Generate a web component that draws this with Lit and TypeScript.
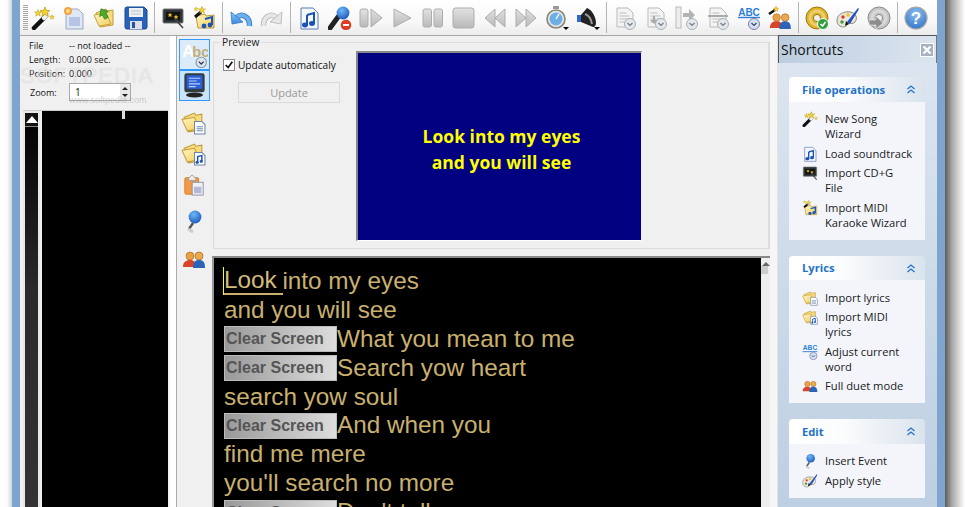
import { LitElement, html, css, svg } from "lit";
import { customElement } from "lit/decorators.js";

const clock = (x = 17, y = 18) => svg`<circle cx=${x} cy=${y} r="5.5" fill="#e4e8ea" stroke="#a9b0b4"/><path d="M${x - 2.5} ${y - 1}l2.5 2.5 2.5-2.5" fill="none" stroke="#778" stroke-width="1.2"/>`;
const greyDoc = svg`<path d="M4 2h11l5 5v14H4z" fill="#f4f4f4" stroke="#b9b9b9"/><path d="M6.5 7h7M6.5 10h10M6.5 13h10M6.5 16h6" stroke="#bdbdbd"/>`;
const folder = svg`<path d="M3 7l10-4 1 2 6-1v15l-13 2z" fill="#f6dc7c" stroke="#c09a3a"/><path d="M1 9l12-2 5 11-12 2z" fill="url(#fold)" stroke="#c9a23f"/>`;
const wandPath = svg`<path d="M3 22L15 10" stroke="#111" stroke-width="4.5" stroke-linecap="round"/><path d="M13 12L17 8" stroke="#eee" stroke-width="4.5" stroke-linecap="round"/>`;
const star = (x: number, y: number, r: number) => svg`<path transform="translate(${x} ${y}) scale(${r})" d="M0-1L.3-.3 1-.3.45.15.65.9 0 .45-.65.9-.45.15-1-.3-.3-.3z" fill="#f5d327" stroke="#a88a10" stroke-width=".12"/>`;
const duet = svg`<circle cx="8" cy="9" r="4" fill="#e8a044" stroke="#a8641c" stroke-width=".6"/><path d="M1 20c0-5 3-7 7-7s6 2 6 7z" fill="#d8442a"/><circle cx="17" cy="9" r="4" fill="#eda94e" stroke="#94581a" stroke-width=".6"/><path d="M11 21c0-6 2-8 6-8s6 2 6 8z" fill="#2a63b8"/>`;
const disc = (c: string, d: string) => svg`<circle cx="12" cy="12" r="11" fill=${c} stroke=${d}/><circle cx="12" cy="12" r="7" fill="none" stroke="#fff" stroke-opacity=".35" stroke-width="3"/><circle cx="12" cy="12" r="3.6" fill="#eee" stroke=${d}/>`;
const monitor = svg`<rect x="2" y="3" width="20" height="14" rx="1" fill="#2d3438" stroke="#777"/>`;

const icons: Record<string, unknown> = {
  wand: svg`${wandPath}${star(14, 6, 5)}${star(7, 7, 3.5)}${star(21, 11, 2.5)}`,
  newdoc: svg`<path d="M4 3h12l5 5v15H4z" fill="#dfe7f4" stroke="#9aa8c4"/><rect x="7" y="11" width="11" height="9" fill="#b6c5e6"/><circle cx="6" cy="5" r="4" fill="#f5a14a"/><circle cx="6" cy="5" r="2" fill="#fbe27a"/>`,
  open: svg`${folder}<path d="M9 13V8H6l5-6 5 6h-3v5z" transform="rotate(-30 11 8)" fill="#4cab2c" stroke="#2b7a18" stroke-width=".6"/>`,
  save: svg`<path d="M1 3a2 2 0 012-2h17l3 3v17a2 2 0 01-2 2H3a2 2 0 01-2-2z" fill="#2762b8" stroke="#174a94"/><rect x="5" y="2" width="14" height="9" fill="#eef1f6"/><path d="M7 5h10M7 8h10" stroke="#bbc"/><rect x="6" y="15" width="12" height="8" fill="#dde"/><rect x="8" y="16" width="3" height="6" fill="#27509a"/>`,
  cdg: svg`${monitor}<path d="M5 6h14v8H5z" fill="#111"/>${star(9, 9, 2.3)}${star(15, 11, 2.3)}<path d="M14 13l8 9" stroke="#444" stroke-width="1.6"/>`,
  midi: svg`<path d="M4 10l9-2 1 2 8-1v13H6z" fill="url(#fold)" stroke="#c09a3a"/><path d="M13 13l7-2v8" fill="none" stroke="#1c55b8" stroke-width="2"/><circle cx="12" cy="20" r="2.4" fill="#1c55b8"/><circle cx="18" cy="19" r="2.4" fill="#1c55b8"/><path d="M3 11L9 6" stroke="#111" stroke-width="3"/>${star(10, 4, 3.6)}${star(4, 3, 2.2)}`,
  undo: svg`<path d="M20.500 20C21 11 13 6 7 12" fill="none" stroke="#2c76c8" stroke-width="5.400"/><path d="M20.500 20C21 11 13 6 7 12" fill="none" stroke="#6db0f0" stroke-width="3.800"/><path d="M2 6l1 12 11-2z" fill="url(#blue)" stroke="#2c76c8" stroke-width=".8" stroke-linejoin="round"/>`,
  redo: svg`<path d="M3.500 20C3 11 11 6 17 12" fill="none" stroke="#b4b4b4" stroke-width="5.400"/><path d="M3.500 20C3 11 11 6 17 12" fill="none" stroke="#e6e6e6" stroke-width="3.800"/><path d="M22 6l-1 12-11-2z" fill="#e6e6e6" stroke="#b4b4b4" stroke-width=".8" stroke-linejoin="round"/>`,
  note: svg`<path d="M4 2h12l5 5v16H4z" fill="#f5f7fb" stroke="#5b7db8"/><path d="M10 9l7-2v10" fill="none" stroke="#1b53b5" stroke-width="2"/><path d="M10 9v10" stroke="#1b53b5" stroke-width="2"/><ellipse cx="8" cy="19" rx="3" ry="2.4" fill="#1b53b5"/><ellipse cx="15" cy="17.5" rx="3" ry="2.4" fill="#1b53b5"/>`,
  mic: svg`<path d="M2 22L10 11" stroke="#222" stroke-width="5" stroke-linecap="round"/><circle cx="15" cy="7" r="6.4" fill="url(#blue2)"/><circle cx="18" cy="19" r="5" fill="#e33b22" stroke="#a5200f" stroke-width=".5"/><rect x="15" y="18" width="6" height="2" fill="#fff"/>`,
  step: svg`<g fill="url(#gm)" stroke="#adadad"><rect x="1" y="3" width="8" height="18" rx="2"/><path d="M12 3l11 9-11 9z" stroke-linejoin="round"/></g>`,
  play: svg`<path d="M4 3l17 9-17 9z" fill="url(#gm)" stroke="#adadad" stroke-linejoin="round"/>`,
  pause: svg`<g fill="url(#gm)" stroke="#adadad"><rect x="2" y="3" width="8.5" height="18" rx="2"/><rect x="13" y="3" width="8.5" height="18" rx="2"/></g>`,
  stop: svg`<rect x="1" y="2" width="21" height="20" rx="2.5" fill="url(#gm)" stroke="#adadad"/>`,
  rew: svg`<g fill="url(#gm)" stroke="#adadad" stroke-linejoin="round"><path d="M12 3L2 12l10 9z"/><path d="M22 3L12 12l10 9z"/></g>`,
  ff: svg`<g fill="url(#gm)" stroke="#adadad" stroke-linejoin="round"><path d="M2 3l10 9-10 9z"/><path d="M12 3l10 9-10 9z"/></g>`,
  timer: svg`<rect x="8" y="0" width="6" height="3" fill="#999"/><circle cx="11" cy="13" r="9" fill="#dfe6ea" stroke="#8d8674" stroke-width="1.6"/><circle cx="11" cy="13" r="6.5" fill="#6eaee2"/><path d="M11 13l3-5" stroke="#fff" stroke-width="1.4"/><path d="M18 21h6l-3 3z" fill="#000"/>`,
  speaker: svg`<path d="M1 9h4v7H1z" fill="#2f68c8"/><path d="M5 9l6-7c5 2 9 9 9 15 0 2-1 4-3 4l-12-5z" fill="#222"/><path d="M9 8c3 1 6 5 7 10" stroke="#999" stroke-width="2" fill="none"/><path d="M18 21h6l-3 3z" fill="#000"/>`,
  doc1: svg`${greyDoc}${clock()}`,
  doc2: svg`${greyDoc}<path d="M9 10v4H6l4 4 4-4h-3v-4z" fill="#aaa"/>${clock()}`,
  doc3: svg`<rect x="1" y="1" width="5" height="21" fill="#eee" stroke="#bbb"/><path d="M8 7h6V3l6 6-6 6v-4H8z" fill="#b3b3b3"/>${clock()}`,
  doc4: svg`${greyDoc}<path d="M2 10h20" stroke="#999" stroke-width="1.5"/>${clock()}`,
  abc: svg`<text x="12" y="9.5" text-anchor="middle" class="abctext">ABC</text><path d="M1 11.5h22" stroke="#2e7fd8" stroke-width="1.4"/><circle cx="17" cy="18" r="5.5" fill="#cfe2f2" stroke="#87a"/><path d="M14.5 17l2.5 2.5 2.5-2.5" fill="none" stroke="#446" stroke-width="1.2"/>`,
  duetwiz: svg`<g transform="translate(1 3) scale(.95)">${duet}</g><path d="M1 8l6-4" stroke="#111" stroke-width="2.4"/>${star(8, 3, 2.8)}`,
  duet: duet,
  goldcd: svg`${disc("#e0b424", "#9a7a10")}<circle cx="18" cy="18" r="5.5" fill="#2f9e3c" stroke="#fff"/><path d="M15.5 18l2 2 3-4" stroke="#fff" stroke-width="1.5" fill="none"/>`,
  palette: svg`<path d="M1 14c0-6 8-9 13-8 6 1 8 6 5 10-3 3-5 0-7 2-2 3-5 4-8 2-2-1-3-3-3-6z" fill="#ece6d8" stroke="#8a8a80"/><circle cx="7" cy="11" r="1.7" fill="#d8352a"/><circle cx="12" cy="9" r="1.7" fill="#e8c22a"/><circle cx="6" cy="16" r="1.7" fill="#3a9a3a"/><path d="M11 16L22 2l1 1-9 15z" fill="#2450c8"/><path d="M10 15l3 3-4 2z" fill="#111"/>`,
  greycd: svg`${disc("#c4c4c4", "#8c8c8c")}<path d="M2 14h7v-4l7 7-7 6v-4H2z" fill="#8c8c8c" stroke="#eee" stroke-width=".6"/>`,
  help: svg`<circle cx="12" cy="12" r="11" fill="url(#hlp)" stroke="#a9a9a9" stroke-width="1.2"/><text x="12" y="18" text-anchor="middle" class="helptext">?</text>`,
  abcclock: svg`<text x="1" y="14" class="abclight">A</text><text x="10" y="14" class="abctan">bc</text><circle cx="18" cy="19" r="4.6" fill="#dbe7ef" stroke="#8a9aa4"/><path d="M15.8 18.3l2.2 2.2 2.2-2.2" fill="none" stroke="#335" stroke-width="1.1"/>`,
  screen: svg`<rect x="3" y="1" width="18" height="17" rx="2" fill="#333c40"/><rect x="5" y="3" width="14" height="12" fill="#2c5fd8"/><path d="M7 5.5h10M7 8h7M7 10.5h10M7 13h6" stroke="#b8d0f4"/><ellipse cx="12" cy="20.5" rx="7.5" ry="2.2" fill="#222"/>`,
  folderdoc: svg`${folder}<path d="M13 11h7l3 3v9H13z" fill="#fff" stroke="#6f86a8"/><path d="M15 16h6M15 18h6M15 20h6" stroke="#6f86a8"/>`,
  foldernote: svg`${folder}<path d="M13 11h7l3 3v9H13z" fill="#fff" stroke="#6f86a8"/><path d="M16 20v-5l4-1v5" fill="none" stroke="#1c55b8" stroke-width="1.4"/><circle cx="15.5" cy="20.5" r="1.5" fill="#1c55b8"/><circle cx="19.5" cy="19.5" r="1.5" fill="#1c55b8"/>`,
  clip: svg`<rect x="2" y="4" width="15" height="18" rx="1.5" fill="#f29a45" stroke="#d87a28"/><path d="M6 5l4-4 4 4v2H6z" fill="#eee" stroke="#999"/><rect x="10" y="9" width="12" height="14" fill="#eef0f6" stroke="#8b8fa8"/><rect x="12" y="14" width="8" height="7" fill="#b4b8d4"/>`,
  pin: svg`<path d="M11 14L7 20" stroke="#555" stroke-width="2.4"/><path d="M6 20l5 3" stroke="#ccc" stroke-width="3"/><circle cx="13" cy="8" r="6.4" fill="url(#blue2)"/>`,
};

const ic = (name: string, size = 24) =>
  html`<svg class="ic" width=${size} height=${size} viewBox="0 0 24 24">${icons[name]}</svg>`;

const TOOLBAR = [
  ["wand", "newdoc", "open", "save"],
  ["cdg", "midi"],
  ["undo", "redo"],
  ["note", "mic", "step", "play", "pause", "stop", "rew", "ff", "timer", "speaker"],
  ["doc1", "doc2", "doc3", "doc4", "abc", "duetwiz"],
  ["goldcd", "palette", "greycd"],
  ["help"],
];

const CARDS: { title: string; items: [string, string][] }[] = [
  {
    title: "File operations",
    items: [
      ["wand", "New Song\nWizard"],
      ["note", "Load soundtrack"],
      ["cdg", "Import CD+G\nFile"],
      ["midi", "Import MIDI\nKaraoke Wizard"],
    ],
  },
  {
    title: "Lyrics",
    items: [
      ["folderdoc", "Import lyrics"],
      ["foldernote", "Import MIDI\nlyrics"],
      ["abc", "Adjust current\nword"],
      ["duet", "Full duet mode"],
    ],
  },
  {
    title: "Edit",
    items: [
      ["pin", "Insert Event"],
      ["palette", "Apply style"],
    ],
  },
];

const LYRICS: [boolean, string][] = [
  [false, "and you will see"],
  [true, "What you mean to me"],
  [true, "Search yow heart"],
  [false, "search yow soul"],
  [true, "And when you"],
  [false, "find me mere"],
  [false, "you'll search no more"],
  [true, "Don't tell me"],
];

@customElement("app-root")
export class AppRoot extends LitElement {
  static styles = css`
    :host { display: block; width: 965px; height: 507px; overflow: hidden; background: #fff;
      font-family: "Open Sans", "Noto Sans", sans-serif; color: #111; }
    .ic { display: block; flex: none; }
    .abctext { font: bold 10px "Liberation Sans", sans-serif; fill: #2e7fd8; }
    .helptext { font: bold 17px "Liberation Sans", sans-serif; fill: #fff; }
    .abclight { font: bold 15px "Liberation Sans", sans-serif; fill: #fff; }
    .abctan { font: bold 13px "Liberation Sans", sans-serif; fill: #c4ae7c; }
    .defs { display: block; width: 0; height: 0; }
    .screen { display: flex; height: 507px; }
    .shadow-l { width: 12px; background: linear-gradient(90deg, #fff, #fbfbfb 60%, #d4d4d4); }
    .shadow-r { flex: 1; background: linear-gradient(90deg, #5c5c5c, #a8a8a8 35%, #eee 85%, #fff); }
    .frame { width: 917px; display: flex; flex-direction: column; border-left: 8px solid #7fa5cf; border-right: 8px solid #7fa5cf; }

    .toolbar { height: 36px; box-sizing: border-box; display: flex; align-items: center; padding-left: 3px;
      background: linear-gradient(#fff, #f8f8f8 60%, #ececec); border-bottom: 1px solid #a8a8a8; flex: none; }
    .grip { width: 4.5px; height: 26px; background: repeating-linear-gradient(#aaa 0 1px, transparent 1px 2px); }
    .tb { width: 31px; display: flex; justify-content: center; }
    .tsep { width: 6px; display: flex; justify-content: center; }
    .tsep i { display: block; width: 1px; height: 31px; background: #b4b4b4; }

    .body { flex: 1; display: flex; min-height: 0; background: #f0f0f0; }
    .left { width: 150px; position: relative; display: flex; flex-direction: column; font-size: 9px; }
    .info { display: grid; grid-template-columns: 40px 1fr; padding: 3px 0 0 9px; line-height: 14px; height: 42px; box-sizing: content-box; color: #111; flex: none; }
    .zoom { display: flex; align-items: center; height: 20px; margin: 1px 0 0 10px; flex: none; }
    .zoom span:first-child { width: 39px; }
    .spin { width: 62px; height: 18px; box-sizing: border-box; border: 1px solid #aaa; background: #fff; display: flex; justify-content: space-between; align-items: center; padding-left: 5px; font-size: 10px; }
    .spin b { display: flex; flex-direction: column; width: 10px; height: 16px; background: #e8e8e8; align-items: center; justify-content: space-evenly; font-size: 0; }
    .spin b i { display: block; width: 0; height: 0; border: 3px solid transparent; }
    .spin b i:first-child { border-bottom-color: #222; border-top-width: 0; }
    .spin b i:last-child { border-top-color: #222; border-bottom-width: 0; }
    .track { flex: 1; display: flex; margin: 8px 2px 0 3px; border-top: 1px solid #ccc; min-height: 0; }
    .ruler { width: 17px; margin-right: 2px; box-sizing: border-box; border: 2px solid #e8e8e8; border-bottom: 0; background: linear-gradient(#000, #2a2a2a 45%, #333); }
    .ruler div { height: 13px; background: #111; border-bottom: 1px solid #888; display: flex; justify-content: center; align-items: center; }
    .ruler div i { display: block; width: 0; height: 0; border: 6px solid transparent; border-top: 0; border-bottom: 7px solid #fff; }
    .wave { flex: 1; background: #000; display: flex; justify-content: flex-end; padding-right: 43px; }
    .wave i { display: block; width: 3px; height: 8px; background: #ddd; }
    .wm { position: absolute; left: 0; top: 27px; font: 400 22px "Liberation Sans", sans-serif; letter-spacing: 1px; color: rgba(255,255,255,.45); text-shadow: 0 0 1px rgba(150,150,150,.35); pointer-events: none; }
    .wm2 { position: absolute; left: 49px; top: 59px; font: 9px "Liberation Sans", sans-serif; color: rgba(120,120,120,.35); pointer-events: none; }

    .split { width: 6px; background: #fff; border-right: 1px solid #aaa; }
    .main { width: 593px; display: flex; }
    .strip { width: 36px; display: flex; flex-direction: column; align-items: center; flex: none; padding-top: 3px; box-sizing: border-box; }
    .tog { width: 29px; height: 29px; border: 1px solid #3399ff; background: #dcebf9; display: flex; align-items: center; justify-content: center; margin-left: -2px; }
    .tog.on { background: #cbe3f8; }
    .si { height: 31px; display: flex; align-items: center; margin-left: -3px; flex: none; }
    .si.first { margin-top: 6px; }
    .si.pin { margin-top: 5px; }
    .si.duet { margin-top: 7px; }
    .mid { flex: 1; display: flex; flex-direction: column; min-width: 0; }
    fieldset { margin: 0; height: 213px; box-sizing: border-box; border: 1px solid #dcdcdc; border-right: 2px solid #dcdcdc; padding: 2px 0 0 9px; display: flex; font-size: 11px; min-width: 0; }
    legend { padding: 0 2px; margin-left: -3px; font-size: 10.2px; line-height: 13px; height: 13px; color: #222; }
    .controls { width: 133px; flex: none; display: flex; flex-direction: column; }
    .chk { display: flex; align-items: center; gap: 3px; margin-top: 7px; font-size: 10.1px; height: 14px; }
    .box { width: 12px; height: 12px; box-sizing: border-box; border: 1px solid #8a8a8a; background: #fff; display: block; flex: none; }
    .update { margin: 10px 0 0 15px; width: 102px; height: 21px; box-sizing: border-box; border: 1px solid #dadada; color: #999; font-size: 11px; background: #f0f0f0; display: flex; align-items: center; justify-content: center; }
    .preview { width: 286px; height: 190px; box-sizing: border-box; padding: 4px 0 0 4px; background: #000080; border-top: 2px solid #888; border-left: 2px solid #888; border-right: 1px solid #eee; border-bottom: 1px solid #fff; color: #ff0; font: 700 17.5px/26px "Open Sans", sans-serif; display: flex; flex-direction: column; align-items: center; justify-content: center; }
    .lyrics { flex: 1; margin-top: 7px; border-top: 2px solid #888; border-left: 2px solid #999; display: flex; min-height: 0; overflow: hidden; margin-left: -1px; }
    .ltext { flex: 1; background: #000; padding: 9px 0 0 10px; font: 400 24.3px/28.9px "Liberation Sans", sans-serif; color: #c9b06f; overflow: hidden; }
    .line { height: 28.9px; display: flex; align-items: center; white-space: pre; }
    .cur { color: #d4bc7c; border-bottom: 2px solid #c9b06f; line-height: 26px; height: 26px; box-shadow: -1px 0 0 #ff0; margin-right: -1px; }
    .mark { width: 113px; height: 26px; box-sizing: border-box; border: 1px solid #bbb; background: linear-gradient(90deg, #999, #ddd); color: #555; font: 700 16px/24px "Liberation Sans", sans-serif; padding-left: 1px; flex: none; }
    .scroll { width: 9px; background: #eee; flex: none; }
    .arrow { display: block; width: 0; height: 0; margin: 4px auto 0; border: 4px solid transparent; border-top: 0; border-bottom: 4px solid #666; }
    .thumb { height: 8px; background: #ccc; margin-right: 2px; }
    .gap { width: 7px; background: #f6f6f6; border-right: 1px solid #e4e4e4; flex: none; }

    .side { width: 159px; flex: none; margin-top: -1px; display: flex; flex-direction: column; }
    .shead { height: 28px; box-sizing: border-box; flex: none; display: flex; align-items: center; justify-content: space-between; padding: 0 2px 0 2px; border: 1px solid #555; border-bottom: 0; border-right-color: #777; background: linear-gradient(90deg, #bccde0, #dbe5ef); font-size: 14px; color: #111; }
    .close { width: 14px; height: 14px; box-sizing: border-box; border: 1px solid #fff; background: #a8b2be; display: flex; align-items: center; justify-content: center; }
    .sbody { flex: 1; background: linear-gradient(#dce5ef, #bdcfe2); padding: 14px 12px 0 11px; display: flex; flex-direction: column; gap: 16px; min-height: 0; overflow: hidden; }
    .card { flex: none; }
    .chead { height: 24.5px; box-sizing: border-box; border-radius: 4px 4px 0 0; background: linear-gradient(90deg, #fff, #fbfcfd 40%, #dae3ed); padding: 0 9px 0 13px; display: flex; align-items: center; justify-content: space-between; color: #2472c8; font-size: 11.2px; font-weight: 700; }
    .cbody { background: #f3f5fa; padding: 9.5px 8px 10px 13px; display: flex; flex-direction: column; gap: 4.5px; }
    .item { display: grid; grid-template-columns: 23px 1fr; font-size: 11.2px; line-height: 15px; color: #1a1a1a; }
    .item .ic { margin-bottom: -1px; }
    .item span { display: block; white-space: pre-line; }
  `;

  render() {
    return html`
      <svg class="defs" aria-hidden="true">
        <defs>
          <linearGradient id="gm" x1="0" y1="0" x2="0" y2="1"><stop offset="0" stop-color="#e2e2e2"/><stop offset="1" stop-color="#b9b9b9"/></linearGradient>
          <linearGradient id="fold" x1="0" y1="0" x2="1" y2="1"><stop offset="0" stop-color="#fff6c4"/><stop offset="1" stop-color="#f2cf5e"/></linearGradient>
          <linearGradient id="blue" x1="0" y1="0" x2="0" y2="1"><stop offset="0" stop-color="#8cc4f4"/><stop offset="1" stop-color="#3a8ae0"/></linearGradient>
          <radialGradient id="blue2" cx=".4" cy=".3" r=".8"><stop offset="0" stop-color="#6fb8f8"/><stop offset="1" stop-color="#1550b8"/></radialGradient>
          <radialGradient id="hlp" cx=".5" cy=".3" r=".8"><stop offset="0" stop-color="#8cc0ee"/><stop offset="1" stop-color="#2a6cc4"/></radialGradient>
        </defs>
      </svg>
      <div class="screen">
        <div class="shadow-l"></div>
        <div class="frame">
          <div class="toolbar">
            <div class="grip"></div>
            ${TOOLBAR.map((group, g) => html`
              ${g ? html`<div class="tsep"><i></i></div>` : ""}
              ${group.map((n) => html`<div class="tb">${ic(n)}</div>`)}
            `)}
          </div>
          <div class="body">
            <div class="left">
              <div class="info">
                <span>File</span><span>-- not loaded --</span>
                <span>Length:</span><span>0.000 sec.</span>
                <span>Position:</span><span>0.000</span>
              </div>
              <div class="zoom"><span>Zoom:</span><div class="spin">1<b><i></i><i></i></b></div></div>
              <div class="track">
                <div class="ruler"><div><i></i></div></div>
                <div class="wave"><i></i></div>
              </div>
              <div class="wm">SOFTPEDIA</div>
              <div class="wm2">www.softpedia.com</div>
            </div>
            <div class="split"></div>
            <div class="main">
              <div class="strip">
                <div class="tog">${ic("abcclock", 27)}</div>
                <div class="tog on">${ic("screen", 27)}</div>
                <div class="si first">${ic("folderdoc", 25)}</div>
                <div class="si">${ic("foldernote", 25)}</div>
                <div class="si">${ic("clip", 22)}</div>
                <div class="si pin">${ic("pin", 24)}</div>
                <div class="si duet">${ic("duet", 24)}</div>
              </div>
              <div class="mid">
                <fieldset>
                  <legend>Preview</legend>
                  <div class="controls">
                    <div class="chk">
                      <svg class="box" viewBox="0 0 12 12"><path d="M2 6l3 3 5-7" fill="none" stroke="#111" stroke-width="2"/></svg>
                      Update automaticaly
                    </div>
                    <div class="update">Update</div>
                  </div>
                  <div class="preview"><div>Look into my eyes</div><div>and you will see</div></div>
                </fieldset>
                <div class="lyrics">
                  <div class="ltext">
                    <div class="line"><span class="cur">Look </span>into my eyes</div>
                    ${LYRICS.map(([m, t]) => html`<div class="line">${m ? html`<span class="mark">Clear Screen</span>` : ""}${t}</div>`)}
                  </div>
                  <div class="scroll"><i class="arrow"></i><div class="thumb"></div></div>
                </div>
              </div>
            </div>
            <div class="gap"></div>
            <div class="side">
              <div class="shead">Shortcuts
                <div class="close"><svg width="10" height="10" viewBox="0 0 10 10"><path d="M1.5 1.5l7 7M8.5 1.5l-7 7" stroke="#fff" stroke-width="2.4"/></svg></div>
              </div>
              <div class="sbody">
                ${CARDS.map((c) => html`
                  <div class="card">
                    <div class="chead">${c.title}
                      <svg width="10" height="10" viewBox="0 0 10 10"><path d="M1.5 5l3.5-3 3.5 3M1.5 9l3.5-3 3.5 3" fill="none" stroke="#2472c8" stroke-width="1.3"/></svg>
                    </div>
                    <div class="cbody">
                      ${c.items.map(([i, t]) => html`<div class="item">${ic(i, 16)}<span>${t}</span></div>`)}
                    </div>
                  </div>
                `)}
              </div>
            </div>
          </div>
        </div>
        <div class="shadow-r"></div>
      </div>
    `;
  }
}
